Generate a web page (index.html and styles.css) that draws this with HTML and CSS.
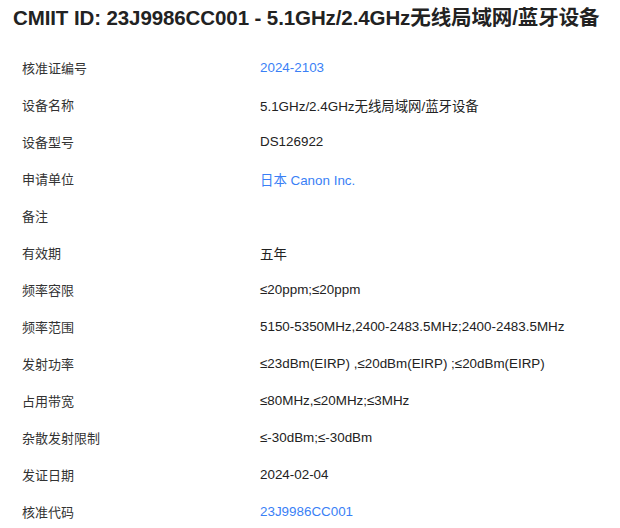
FILE: index.html
```html
<!DOCTYPE html>
<html lang="zh-CN">
<head>
    <meta charset="UTF-8">
    <title>CMIIT ID: 23J9986CC001</title>
    <link rel="stylesheet" href="styles.css">
</head>
<body>
    <div class="container">
        <h1>CMIIT ID: 23J9986CC001 - 5.1GHz/2.4GHz无线局域网/蓝牙设备</h1>
        <div class="details">
            <div class="row"><span class="label">核准证编号</span><a class="value link" href="#">2024-2103</a></div>
            <div class="row"><span class="label">设备名称</span><span class="value">5.1GHz/2.4GHz无线局域网/蓝牙设备</span></div>
            <div class="row"><span class="label">设备型号</span><span class="value">DS126922</span></div>
            <div class="row"><span class="label">申请单位</span><a class="value link" href="#">日本 Canon Inc.</a></div>
            <div class="row"><span class="label">备注</span><span class="value"></span></div>
            <div class="row"><span class="label">有效期</span><span class="value">五年</span></div>
            <div class="row"><span class="label">频率容限</span><span class="value">≤20ppm;≤20ppm</span></div>
            <div class="row"><span class="label">频率范围</span><span class="value">5150-5350MHz,2400-2483.5MHz;2400-2483.5MHz</span></div>
            <div class="row"><span class="label">发射功率</span><span class="value">≤23dBm(EIRP) ,≤20dBm(EIRP) ;≤20dBm(EIRP)</span></div>
            <div class="row"><span class="label">占用带宽</span><span class="value">≤80MHz,≤20MHz;≤3MHz</span></div>
            <div class="row"><span class="label">杂散发射限制</span><span class="value">≤-30dBm;≤-30dBm</span></div>
            <div class="row"><span class="label">发证日期</span><span class="value">2024-02-04</span></div>
            <div class="row"><span class="label">核准代码</span><a class="value link" href="#">23J9986CC001</a></div>
        </div>
    </div>
</body>
</html>
```

FILE: styles.css
```css
body {
    margin: 0;
    font-family: "Liberation Sans", Arial, "Noto Sans CJK SC", sans-serif;
    color: #222;
    background: #fff;
}
.container {
    padding: 4px 13px 0;
}
h1 {
    margin: 0;
    font-size: 20.5px;
    line-height: 28px;
    font-weight: bold;
    letter-spacing: -0.1px;
    color: #222;
    white-space: nowrap;
}
.details {
    margin-top: 17px;
    padding-left: 9px;
}
.row {
    display: grid;
    grid-template-columns: 238px 1fr;
    height: 37px;
    align-items: center;
    font-size: 13px;
}
.label {
    color: #333;
}
.value {
    font-size: 13.4px;
    color: #222;
}
.link {
    color: #3a7ff6;
    text-decoration: none;
}
```
